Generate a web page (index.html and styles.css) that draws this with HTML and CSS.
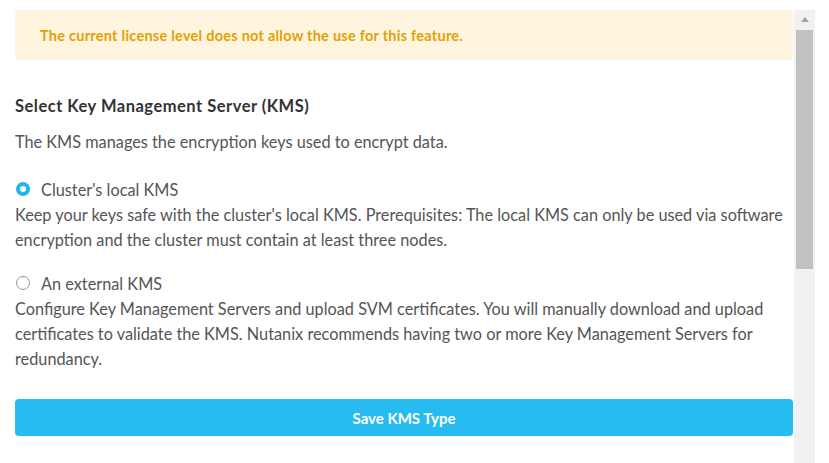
FILE: index.html
```html
<!DOCTYPE html>
<html>
<head>
<meta charset="utf-8">
<link rel="stylesheet" href="styles.css">
</head>
<body>
<div class="frame">
  <div class="content">
    <div class="banner">The current license level does not allow the use for this feature.</div>
    <h2 class="title">Select Key Management Server (KMS)</h2>
    <p class="desc">The KMS manages the encryption keys used to encrypt data.</p>
    <div class="option">
      <label class="radio-row"><span class="radio checked"></span><span class="label">Cluster's local KMS</span></label>
      <p class="help">Keep your keys safe with the cluster's local KMS. Prerequisites: The local KMS can only be used via software encryption and the cluster must contain at least three nodes.</p>
    </div>
    <div class="option">
      <label class="radio-row"><span class="radio"></span><span class="label">An external KMS</span></label>
      <p class="help">Configure Key Management Servers and upload SVM certificates. You will manually download and upload certificates to validate the KMS. Nutanix recommends having two or more Key Management Servers for redundancy.</p>
    </div>
    <button class="save">Save KMS Type</button>
  </div>
  <div class="scrollbar">
    <div class="arrow"></div>
    <div class="thumb"></div>
  </div>
</div>
</body>
</html>
```
FILE: styles.css
```css
html, body {
  margin: 0;
  padding: 0;
  background: #fff;
  font-family: "Lato", "Open Sans", sans-serif;
}
.frame {
  display: flex;
  width: 815px;
  height: 463px;
  overflow: hidden;
}
.content {
  flex: 1;
  padding: 10px 1px 0 15px;
}
.banner {
  background: #fff5de;
  color: #e3a008;
  font-size: 14.5px;
  font-weight: 700;
  letter-spacing: 0.25px;
  height: 50px;
  box-sizing: border-box;
  padding: 0 25px;
  display: flex;
  align-items: center;
  border-radius: 3px;
}
.title {
  margin: 36px 0 0 0;
  font-size: 16.5px;
  font-weight: 700;
  letter-spacing: 0.5px;
  color: #333;
  line-height: 20px;
}
.desc {
  margin: 16px 0 0 0;
  font-size: 16.3px;
  color: #555;
  line-height: 20px;
}
.option {
  margin-top: 27px;
}
.option + .option {
  margin-top: 21px;
}
.radio-row {
  display: flex;
  align-items: center;
  height: 20px;
}
.radio {
  width: 14px;
  height: 14px;
  box-sizing: border-box;
  border-radius: 50%;
  border: 1px solid #8e969f;
  margin: 0 11px 0 1px;
  background: #fff;
}
.radio.checked {
  border: 4px solid #22b5ee;
}
.label {
  font-size: 16.3px;
  color: #555;
}
.help {
  margin: 3px 0 0 0;
  font-size: 16.3px;
  line-height: 25px;
  color: #555;
}
.save {
  display: block;
  width: 100%;
  margin-top: 28px;
  height: 37px;
  border: none;
  border-radius: 4px;
  background: #27bcef;
  color: #fff;
  font-family: "Lato", "Open Sans", sans-serif;
  font-size: 15px;
  font-weight: 700;
}
.scrollbar {
  width: 21px;
  margin-top: 10px;
  background: #f1f1f1;
  display: flex;
  flex-direction: column;
  align-items: center;
}
.arrow {
  width: 0;
  height: 0;
  margin-top: 7px;
  border-left: 4px solid transparent;
  border-right: 4px solid transparent;
  border-bottom: 5px solid #a3a3a3;
}
.thumb {
  width: 17px;
  margin-top: 8px;
  height: 239px;
  background: #c1c1c1;
}
```
